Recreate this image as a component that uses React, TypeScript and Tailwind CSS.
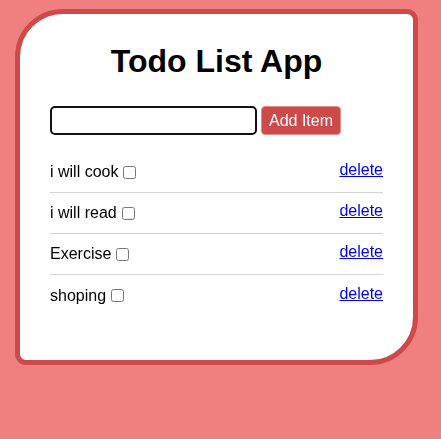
import React, { useState } from 'react';

const initialItems = ['i will cook', 'i will read', 'Exercise', 'shoping'];

const App: React.FC = () => {
  const [items, setItems] = useState<string[]>(initialItems);
  const [text, setText] = useState('');

  const addItem = () => {
    if (!text.trim()) return;
    setItems([...items, text.trim()]);
    setText('');
  };

  return (
    <div className="min-h-screen bg-[#f08080] pt-[9px] pl-[15px] font-['Liberation_Sans',Arial,sans-serif]">
      <div className="w-[403px] h-[356px] bg-white border-[5px] border-[#cc4a4a] rounded-tl-[48px] rounded-tr-[11px] rounded-br-[48px] rounded-bl-[11px] px-[30px]">
        <h1 className="mt-[29px] text-center text-[32px] leading-[37px] font-bold text-black">Todo List App</h1>

        <div className="mt-[26px] flex items-center">
          <input
            autoFocus
            value={text}
            onChange={(e) => setText(e.target.value)}
            className="w-[207px] h-[29px] border-2 border-[#111] rounded-[5px] px-[4px] text-[16px] outline-none"
          />
          <button
            onClick={addItem}
            className="ml-[4px] w-[80px] h-[29px] bg-[#cc4a4a] border border-[#e38a8a] rounded-[4px] text-white text-[16px] leading-none"
          >
            Add Item
          </button>
        </div>

        <ul className="mt-[17px]">
          {items.map((item, i) => (
            <li
              key={i}
              className={`flex h-[41px] items-center justify-between ${i < items.length - 1 ? 'border-b border-[#d3d3d3]' : ''}`}
            >
              <div className="flex items-center text-[16px] text-black">
                <span>{item}</span>
                <input type="checkbox" className="ml-[5px] w-[13px] h-[13px]" />
              </div>
              <a
                href="#"
                onClick={(e) => {
                  e.preventDefault();
                  setItems(items.filter((_, j) => j !== i));
                }}
                className="mb-[4px] text-[16px] text-[#0000ee] underline"
              >
                delete
              </a>
            </li>
          ))}
        </ul>
      </div>
    </div>
  );
};

export default App;
